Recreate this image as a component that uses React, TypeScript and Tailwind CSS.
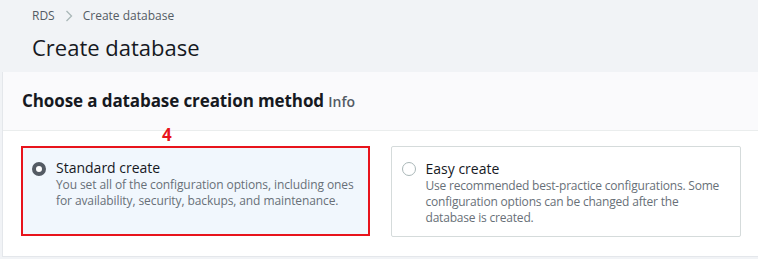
export default function App() {
  return (
    <div
      className="w-[758px] h-[259px] overflow-hidden bg-[#f1f3f6] text-[#16191f]"
      style={{ fontFamily: '"Open Sans", "Noto Sans", Arial, sans-serif' }}
    >
      <div className="h-[72px] pl-[32px] pt-[7px]">
        <div className="flex items-center gap-[10px] text-[12px] leading-[18px] text-[#545b64]">
          <span>RDS</span>
          <svg width="8" height="12" viewBox="0 0 8 12" className="text-[#aab7b8]">
            <path d="M1.5 1l5 5-5 5" fill="none" stroke="currentColor" strokeWidth="1.3" />
          </svg>
          <span>Create database</span>
        </div>
        <h1 className="mt-[7px] text-[22px] leading-[30px] font-normal text-[#16191f]">Create database</h1>
      </div>

      <div className="ml-[2px] bg-white border-l border-b border-[#e4e7eb] h-[185px]">
        <div className="h-[59px] bg-[#fafafc] border-b border-[#eaeded] pl-[19px] flex items-center">
          <h2 className="text-[17px] font-bold leading-[24px] text-[#16191f] tracking-[-0.1px]">
            Choose a database creation method{' '}
            <span className="text-[14px] font-semibold text-[#545b64] tracking-normal">Info</span>
          </h2>
        </div>

        <div className="pl-[18px] pr-[17px]">
          <div className="h-[15px] flex items-start pl-[141px]">
            <span className="text-[17px] leading-[18px] font-bold text-[#e8141c] -mt-[5px]">4</span>
          </div>
          <div className="flex gap-[21px]">
            <div className="w-[349px] h-[90px] border-2 border-[#e8141c] bg-[#f1f7fd] pl-[9px] pt-[11px] flex gap-[10px]">
              <div className="mt-[3px] w-[14px] h-[14px] rounded-full border-[4px] border-[#545b64] bg-white shrink-0" />
              <div>
                <div className="text-[14px] leading-[17px] text-[#16191f]">Standard create</div>
                <div className="text-[12px] leading-[16px] text-[#687078] mt-[1px] tracking-[-0.1px]">
                  You set all of the configuration options, including ones for availability, security, backups, and maintenance.
                </div>
              </div>
            </div>
            <div className="w-[351px] h-[91px] border border-[#d5dbdb] rounded-[2px] bg-white pl-[10px] pt-[13px] flex gap-[10px]">
              <div className="mt-[2px] w-[14px] h-[14px] rounded-full border border-[#aab7b8] bg-white shrink-0" />
              <div className="w-[303px] shrink-0">
                <div className="text-[14px] leading-[17px] text-[#16191f]">Easy create</div>
                <div className="text-[12px] leading-[16px] text-[#687078] mt-[1px] tracking-[-0.2px]">
                  Use recommended best-practice configurations. Some configuration options can be changed after the database is created.
                </div>
              </div>
            </div>
          </div>
        </div>
      </div>
    </div>
  )
}
